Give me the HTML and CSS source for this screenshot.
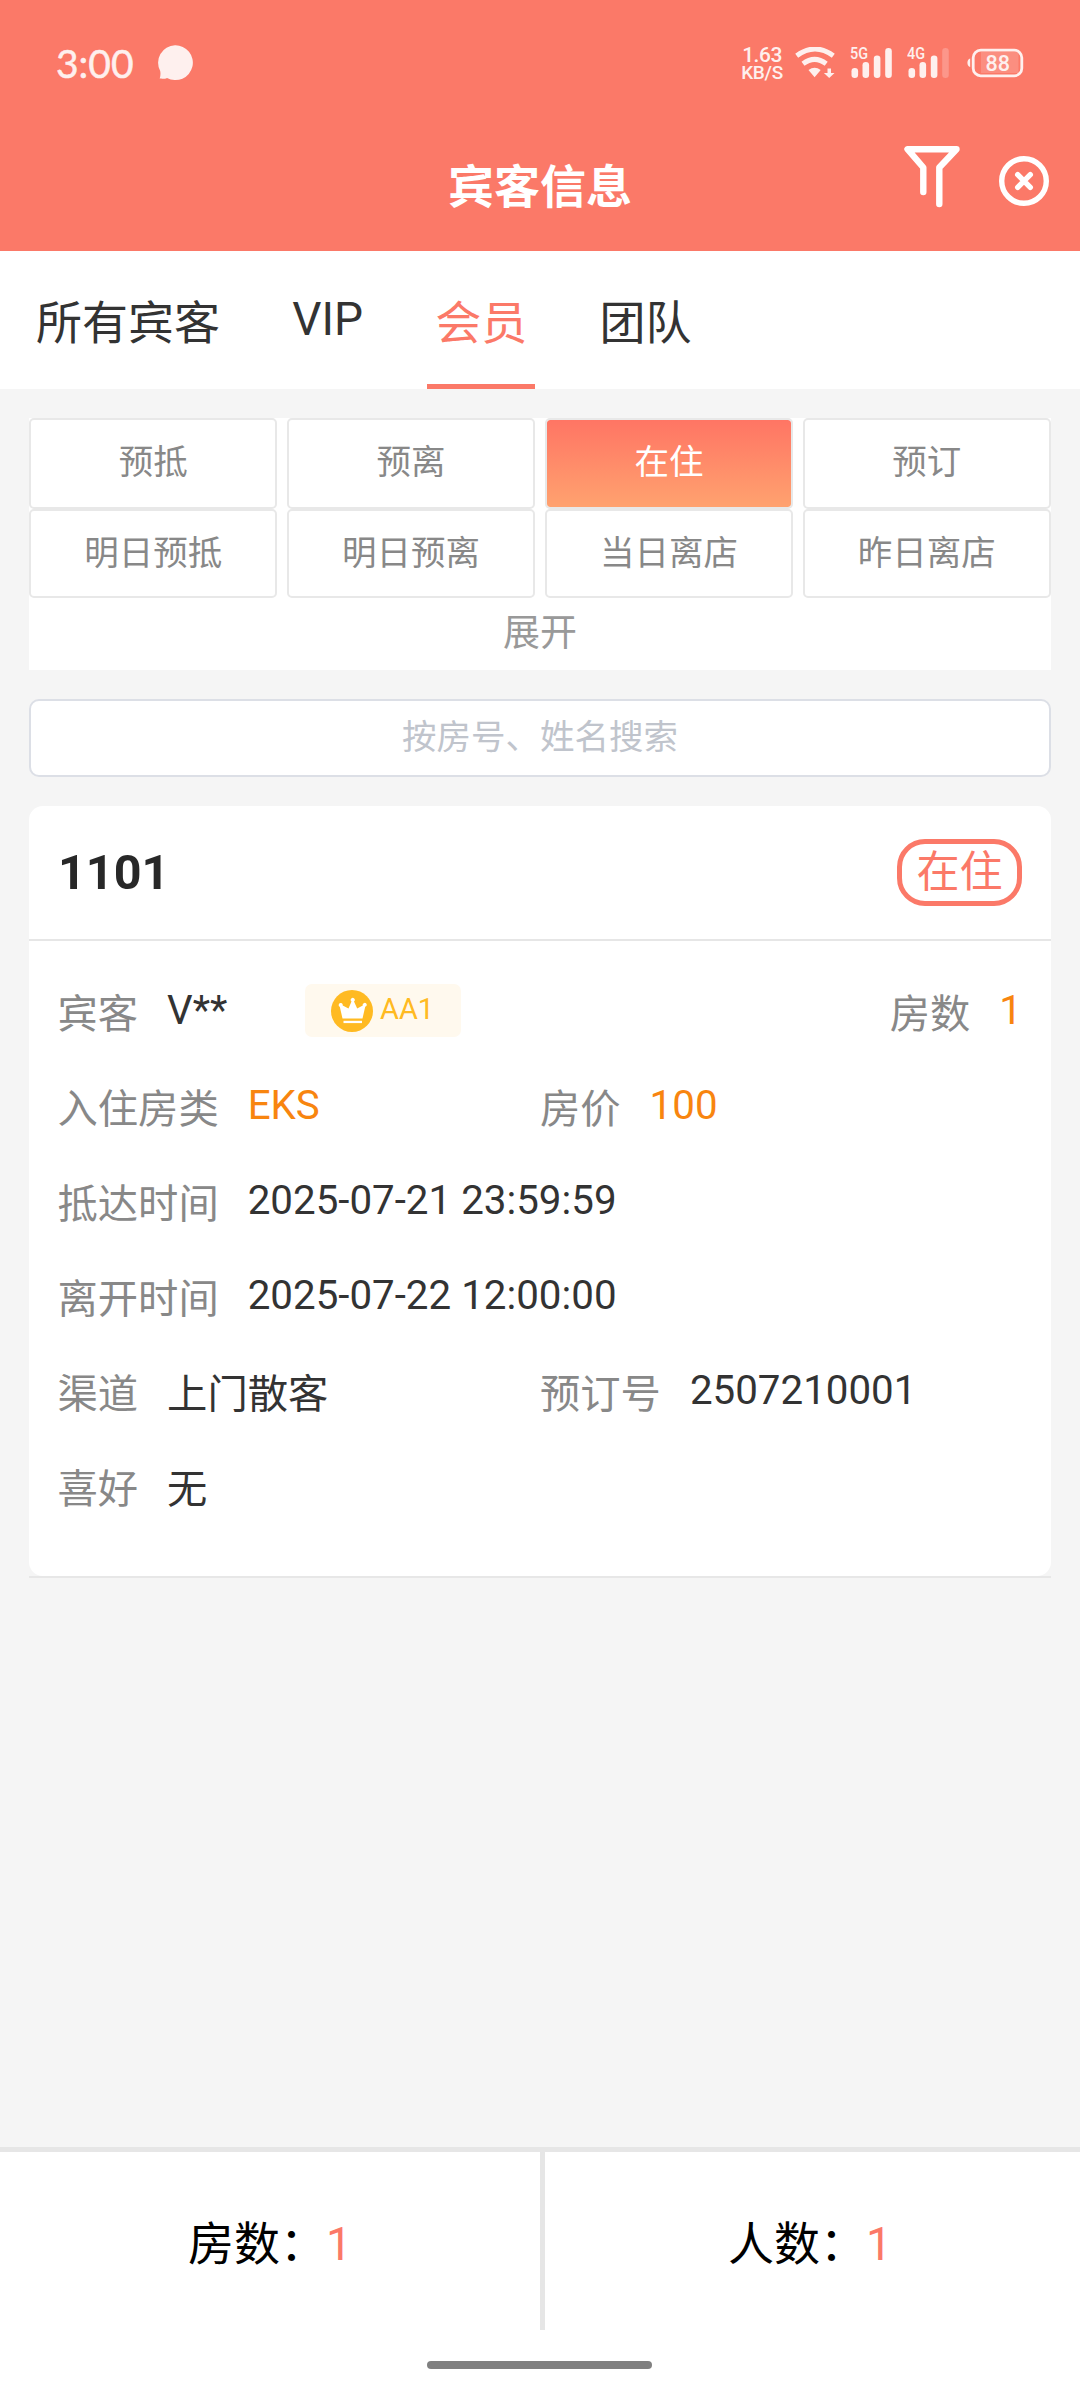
FILE: index.html
```html
<!DOCTYPE html>
<html lang="zh-CN">
<head>
    <meta charset="UTF-8">
    <meta name="viewport" content="width=device-width, initial-scale=1.0">
    <title>宾客信息</title>
    <link rel="stylesheet" href="styles.css">
</head>
<body>
    <!-- Status bar -->
    <div class="status-bar">
        <span class="clock">3:00</span>
        <svg class="bubble" width="36" height="36" viewBox="0 0 36 36">
            <path d="M18 0.3a17.4 17.4 0 1 1-8 32.6c-1.8.9-4.5.9-7.3.7.8-2.500 1-5 .5-7.600A17.400 17.400 0 0 1 18 .3z"/>
        </svg>
        <div class="net-speed">
            <span class="speed">1.63</span>
            <span class="unit">KB/S</span>
        </div>
        <svg class="wifi" width="40" height="32" viewBox="0 0 40 32">
            <path class="line" d="M1.700 8.700Q20-4.700 38.300 8.700"/>
            <path class="line" d="M8 16.700Q19.600 8 31.200 16.700"/>
            <path d="M13.500 23Q19.600 18.500 25.700 23L19.600 30.300z"/>
            <path d="M32.500 21.500h3.500v4.500h3.500l-5.300 5-5.300-5h3.600z"/>
        </svg>
        <svg class="signal" width="42" height="40" viewBox="0 -4 42 40">
            <text x="0" y="12" textLength="18" lengthAdjust="spacingAndGlyphs">5G</text>
            <rect x="1.500" y="21" width="6.600" height="10" rx="3.200"/>
            <rect x="12.500" y="15" width="6.600" height="16" rx="3.200"/>
            <rect x="23.800" y="8.500" width="6.600" height="22.500" rx="3.200"/>
            <rect x="35.200" y="1" width="6.600" height="30" rx="3.200"/>
        </svg>
        <svg class="signal" width="42" height="40" viewBox="0 -4 42 40">
            <text x="0" y="12" textLength="18" lengthAdjust="spacingAndGlyphs">4G</text>
            <rect x="1.500" y="21" width="6.600" height="10" rx="3.200"/>
            <rect x="12.500" y="15" width="6.600" height="16" rx="3.200"/>
            <rect x="23.800" y="8.500" width="6.600" height="22.500" rx="3.200"/>
            <rect class="weak" x="35.200" y="1" width="6.600" height="30" rx="3.200"/>
        </svg>
        <svg class="battery" width="57" height="30" viewBox="0 0 57 30">
            <path d="M3.200 10.500v8.500C-.5 18.500-.5 11 3.200 10.500z"/>
            <rect class="level" x="14" y="4" width="37.500" height="21"/>
            <rect class="shell" x="6.200" y="2.200" width="48.600" height="25.600" rx="7.500"/>
            <text x="18.500" y="22.800" textLength="24.500" lengthAdjust="spacingAndGlyphs">88</text>
        </svg>
    </div>

    <!-- Title bar -->
    <div class="nav-bar">
        <h1 class="nav-title">宾客信息</h1>
        <div class="nav-actions">
            <svg class="filter-icon" width="58" height="66" viewBox="0 0 58 66">
                <path d="M20.300 48V23.500L4.500 5.200H53.500L36.300 23.500V60"/>
            </svg>
            <svg class="close-icon" width="50" height="50" viewBox="0 0 50 50">
                <circle cx="25" cy="25" r="22.300"/>
                <path d="M18.700 18.700l12.600 12.600M31.300 18.700l-12.600 12.600"/>
            </svg>
        </div>
    </div>

    <!-- Guest type tabs -->
    <div class="tabs">
        <span class="tab">所有宾客</span>
        <span class="tab num">VIP</span>
        <span class="tab active">会员</span>
        <span class="tab">团队</span>
    </div>

    <div class="content">
        <div class="filters">
            <div class="filter-grid">
                <div class="filter">预抵</div>
                <div class="filter">预离</div>
                <div class="filter active">在住</div>
                <div class="filter">预订</div>
                <div class="filter">明日预抵</div>
                <div class="filter">明日预离</div>
                <div class="filter">当日离店</div>
                <div class="filter">昨日离店</div>
            </div>
            <div class="expand">展开</div>
        </div>

        <input class="search" type="text" placeholder="按房号、姓名搜索">

        <!-- Guest card -->
        <div class="card-wrap">
            <div class="card">
                <div class="card-header">
                    <span class="room-no">1101</span>
                    <span class="state">在住</span>
                </div>
                <div class="card-body">
                    <div class="row">
                        <span class="label">宾客</span>
                        <span class="value num">V**</span>
                        <span class="level-badge">
                            <svg width="42" height="42" viewBox="0 0 42 42">
                                <circle cx="21" cy="21" r="21"/>
                                <path class="crown" d="M11.500 28.500L8.800 16.800A2 2 0 1 1 11.700 15.400L17.500 18.500 20.500 11.500A2 2 0 1 1 23 11.500L26.200 18.500 31.800 15.400A2 2 0 1 1 34.200 16.800L31.500 28.500z"/>
                                <path class="crown" d="M12.500 30.800h18.500v2.300H12.500z"/>
                            </svg>
                            <span class="level-name num">AA1</span>
                        </span>
                        <span class="label right">房数</span>
                        <span class="value num orange">1</span>
                    </div>
                    <div class="row split">
                        <div class="field"><span class="label">入住房类</span><span class="value num orange">EKS</span></div>
                        <div class="field"><span class="label">房价</span><span class="value num orange">100</span></div>
                    </div>
                    <div class="row">
                        <span class="label">抵达时间</span>
                        <span class="value num">2025-07-21 23:59:59</span>
                    </div>
                    <div class="row">
                        <span class="label">离开时间</span>
                        <span class="value num">2025-07-22 12:00:00</span>
                    </div>
                    <div class="row split">
                        <div class="field"><span class="label">渠道</span><span class="value">上门散客</span></div>
                        <div class="field"><span class="label">预订号</span><span class="value num">2507210001</span></div>
                    </div>
                    <div class="row">
                        <span class="label">喜好</span>
                        <span class="value">无</span>
                    </div>
                </div>
            </div>
        </div>
    </div>

    <!-- Totals -->
    <div class="footer">
        <div class="totals">
            <div class="total">房数：<span class="num">1</span></div>
            <div class="total">人数：<span class="num">1</span></div>
        </div>
        <div class="home-bar"></div>
    </div>
</body>
</html>
```
FILE: styles.css
```css
* {
    box-sizing: border-box;
}

body {
    margin: 0;
    width: 1080px;
    height: 2400px;
    display: flex;
    flex-direction: column;
    background-color: #f5f5f5;
    font-family: "Noto Sans CJK SC", sans-serif;
    color: #333;
}

/* Latin text and digits */
.num {
    font-family: Roboto, sans-serif;
}

/* Status bar */
.status-bar {
    display: flex;
    align-items: center;
    height: 126px;
    padding: 0 56px;
    background-color: #fb7968;
    color: #fef0ee;
    fill: #fef0ee;
    font-family: Roboto, sans-serif;
}

.clock {
    width: 101px;
    font-family: Lato, sans-serif;
    font-size: 39px;
    -webkit-text-stroke: 0.5px #fef0ee;
}

.net-speed {
    display: flex;
    flex-direction: column;
    align-items: center;
    width: 44px;
    margin-left: auto;
    margin-top: 2px;
    line-height: 17px;
    white-space: nowrap;
}

.speed {
    font-size: 21px;
    font-weight: 500;
    letter-spacing: -0.5px;
}

.unit {
    font-size: 19px;
    font-weight: 500;
    letter-spacing: -0.3px;
}

.wifi {
    margin-left: 11px;
}

.wifi .line {
    fill: none;
    stroke: #fef0ee;
    stroke-width: 5;
}

.signal {
    margin-left: 15px;
}

.signal text {
    font-size: 16px;
    font-weight: 500;
}

.signal .weak {
    opacity: 0.25;
}

.battery {
    margin-left: 18px;
}

.battery .level {
    opacity: 0.18;
}

.battery .shell {
    fill: none;
    stroke: #fef0ee;
    stroke-width: 2.8;
}

.battery text {
    font-size: 22px;
    font-weight: 500;
}

/* Title bar */
.nav-bar {
    display: grid;
    grid-template-columns: 1fr auto 1fr;
    align-items: center;
    height: 125px;
    padding: 0 31px 12px;
    background-color: #fb7968;
    color: #fff;
}

.nav-title {
    grid-column: 2;
    margin: 0;
    font-size: 46px;
    line-height: 66px;
}

.nav-actions {
    display: flex;
    align-items: center;
    justify-content: flex-end;
    gap: 38px;
    margin-top: -4px;
    fill: none;
    stroke: #fff;
    stroke-linecap: round;
    stroke-linejoin: round;
}

.filter-icon {
    margin-top: -7px;
    stroke-width: 6.4;
}

.close-icon {
    stroke-width: 5.4;
}

/* Tabs */
.tabs {
    display: flex;
    height: 138px;
    padding-left: 28px;
    gap: 56.2px;
    background-color: #fff;
    font-size: 46px;
    line-height: 136px;
}

.tab {
    height: 138px;
    padding: 0 8px;
}

.tab.active {
    color: #fb7968;
    border-bottom: 5px solid #fb7968;
}

.content {
    display: flex;
    flex-direction: column;
    flex: 1;
    gap: 29px;
    padding: 29px;
}

/* Filters */
.filters {
    height: 252px;
    background-color: #fff;
}

.filter-grid {
    display: grid;
    grid-template-columns: repeat(4, 1fr);
    grid-template-rows: 91px 89px;
    column-gap: 9.4px;
}

.filter {
    border: 2px solid #e8e8e8;
    border-radius: 5px;
    font-size: 34.5px;
    line-height: 78px;
    text-align: center;
    color: #888;
}

.filter.active {
    color: #fff;
    background: linear-gradient(#ff7564, #ffa26f) padding-box;
}

.expand {
    font-size: 37px;
    line-height: 64px;
    text-align: center;
    color: #999;
}

.search {
    width: 100%;
    height: 78px;
    padding: 0 0 9px;
    border: 2px solid #dcdfe6;
    border-radius: 10px;
    background-color: #fff;
    font-family: inherit;
    font-size: 34.5px;
    text-align: center;
}

.search::placeholder {
    color: #c0c4cc;
}

/* Guest card */
.card-wrap {
    border-bottom: 2px solid #e7e7e7;
}

.card {
    border-radius: 14px;
    background-color: #fff;
}

.card-header {
    display: flex;
    align-items: center;
    justify-content: space-between;
    height: 135px;
    padding: 0 29px;
    border-bottom: 2px solid #e6e6e6;
}

.room-no {
    font-family: Roboto, sans-serif;
    font-size: 48.5px;
    font-weight: bold;
    color: #282828;
}

.state {
    width: 125px;
    height: 67px;
    border: 5px solid #fb7968;
    border-radius: 28px;
    font-size: 43px;
    line-height: 48px;
    text-align: center;
    color: #fb7968;
}

.card-body {
    padding: 22px 29px 43px 28.5px;
    font-size: 40.3px;
}

.row,
.field {
    display: flex;
    align-items: center;
    height: 95px;
}

.split {
    display: grid;
    grid-template-columns: 482.5px 1fr;
}

.label {
    margin-right: 29px;
    line-height: 56px;
    color: #888;
}

.label.right {
    margin-left: auto;
}

.value.orange {
    color: #f8850f;
}

.level-badge {
    display: flex;
    align-items: center;
    gap: 7px;
    width: 156px;
    height: 53px;
    margin-left: 77.5px;
    padding-left: 26px;
    border-radius: 7px;
    background-color: #fff9ee;
    font-size: 29px;
    color: #ffba22;
    fill: #ffba22;
}

.level-name {
    padding-bottom: 3px;
}

.level-badge .crown {
    fill: #fff;
}

/* Totals */
.footer {
    height: 253px;
    border-top: 5px solid #e6e6e6;
    background-color: #fff;
}

.totals {
    display: grid;
    grid-template-columns: 1fr 1fr;
    grid-template-rows: 178px;
}

.total {
    font-size: 46px;
    line-height: 176px;
    text-align: center;
    color: #000;
}

.total + .total {
    border-left: 5px solid #e6e6e6;
    padding-right: 5px;
}

.total .num {
    color: #fb7968;
}

.home-bar {
    width: 225px;
    height: 8px;
    margin: 31px 0 0 427px;
    border-radius: 4px;
    background-color: #808080;
}
```
